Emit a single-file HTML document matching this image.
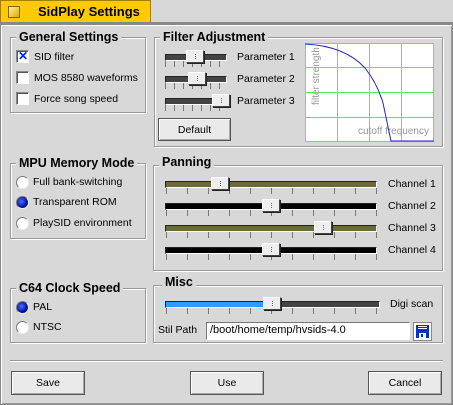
<!DOCTYPE html>
<html><head><meta charset="utf-8"><style>
*{box-sizing:border-box;margin:0;padding:0}
body{width:453px;height:405px;background:#d8d8d8;font-family:"Liberation Sans",sans-serif;font-size:10px;color:#000;position:relative;overflow:hidden}
.a{position:absolute}
.tab{left:0;top:0;width:151px;height:23px;background:#ffcb00;border:1px solid #a08000;border-bottom:none}
.win{left:0;top:22px;width:453px;height:383px;border:1px solid #888;box-shadow:inset 1px 1px 0 #fff,inset -1px -1px 0 #999;border-top:3px solid #888}
.box{border:1px solid #999;box-shadow:1px 1px 0 #fff,inset 1px 1px 0 #fff}
.ttl{font-weight:bold;font-size:12.5px;background:#d8d8d8;padding:0 3px;top:-9px;left:5px;position:absolute;line-height:16px}
.cb{width:13px;height:13px;background:#fff;border:1px solid #888;border-right-color:#fff;border-bottom-color:#fff;box-shadow:inset 1px 1px 0 #555}
.rd{width:13px;height:13px;border-radius:50%;background:#fff;border:1px solid #777;border-right-color:#eee;border-bottom-color:#eee}
.rd.on{background:radial-gradient(circle at 40% 40%,#4a6cff 0,#0010a0 60%,#000060 100%)}
.lbl{font-size:10.5px;line-height:12px}
.trk{height:7px;border:1px solid #222;border-bottom-color:#fff;border-right-color:#fff}
.tk{height:6px;background:repeating-linear-gradient(90deg,#777 0 1px,transparent 1px 21px)}
.th{width:18px;height:13px;background:#eee;border:1px solid #444;border-top-color:#fff;border-left-color:#fff;box-shadow:1px 1px 0 #222}
.th:after{content:"";position:absolute;left:8px;top:3px;width:1px;height:6px;background:repeating-linear-gradient(#666 0 1px,transparent 1px 2px)}
.btn{height:24px;background:#eaeaea;border:1px solid #555;box-shadow:inset 1px 1px 0 #fff,inset -1px -1px 0 #aaa;text-align:center;line-height:22px;font-size:10.5px}
</style></head><body>
<div class="a tab"><div class="a" style="left:7px;top:5px;width:12px;height:12px;background:linear-gradient(135deg,#fff3a0,#e0a800);border:1px solid #806000"></div><div class="a" style="left:37px;top:3px;font-weight:bold;font-size:13px">SidPlay Settings</div></div>
<div class="a win"></div>

<div class="a box" style="left:10px;top:37px;width:136px;height:76px"><span class="ttl">General Settings</span></div>
<div class="a cb" style="left:16px;top:50px"><span class="a" style="left:1px;top:-2px;color:#0020ff;font-weight:bold;font-size:12px">✕</span></div>
<div class="a lbl" style="left:34px;top:51px">SID filter</div>
<div class="a cb" style="left:16px;top:71px"></div><div class="a lbl" style="left:34px;top:72px">MOS 8580 waveforms</div>
<div class="a cb" style="left:16px;top:92px"></div><div class="a lbl" style="left:34px;top:93px">Force song speed</div>

<div class="a box" style="left:154px;top:37px;width:289px;height:110px"><span class="ttl">Filter Adjustment</span></div>
<div class="a trk" style="left:165px;top:54px;width:62px;background:#444"></div><div class="a tk" style="left:165px;top:61px;width:63px;background:repeating-linear-gradient(90deg,#777 0 1px,transparent 1px 9px)"></div><div class="a th" style="left:186px;top:50px"></div>
<div class="a lbl" style="left:237px;top:51px">Parameter 1</div>
<div class="a trk" style="left:165px;top:76px;width:62px;background:#444"></div><div class="a tk" style="left:165px;top:83px;width:63px;background:repeating-linear-gradient(90deg,#777 0 1px,transparent 1px 9px)"></div><div class="a th" style="left:188px;top:72px"></div>
<div class="a lbl" style="left:237px;top:73px">Parameter 2</div>
<div class="a trk" style="left:165px;top:98px;width:62px;background:#444"></div><div class="a tk" style="left:165px;top:105px;width:63px;background:repeating-linear-gradient(90deg,#777 0 1px,transparent 1px 9px)"></div><div class="a th" style="left:212px;top:94px"></div>
<div class="a lbl" style="left:237px;top:95px">Parameter 3</div>
<div class="a btn" style="left:158px;top:118px;width:73px;height:23px">Default</div>
<svg class="a" style="left:305px;top:43px" width="129" height="99" shape-rendering="crispEdges">
<rect x="0" y="0" width="129" height="99" fill="#fff"/>
<g fill="#5e5"><rect x="0" y="0" width="129" height="1"/><rect x="0" y="98" width="129" height="1"/><rect x="0" y="0" width="1" height="99"/><rect x="128" y="0" width="1" height="99"/>
<rect x="32" y="0" width="1" height="99"/><rect x="64" y="0" width="1" height="99"/><rect x="96" y="0" width="1" height="99"/>
<rect x="0" y="24" width="129" height="1"/><rect x="0" y="49" width="129" height="1"/><rect x="0" y="74" width="129" height="1"/></g>
<text x="124" y="91" text-anchor="end" font-size="10" fill="#999" font-family="Liberation Sans">cutoff frequency</text>
<text transform="translate(14,62) rotate(-90)" font-size="10" fill="#999" font-family="Liberation Sans">filter strength</text>
<path d="M0 1 Q40 3 60 25 Q72 40 78 60 L86 98 L129 98" fill="none" stroke="#22c" stroke-width="1" shape-rendering="auto"/>
</svg>

<div class="a box" style="left:10px;top:163px;width:136px;height:76px"><span class="ttl">MPU Memory Mode</span></div>
<div class="a rd" style="left:16px;top:176px"></div><div class="a lbl" style="left:33px;top:176px">Full bank-switching</div>
<div class="a rd on" style="left:16px;top:196px"></div><div class="a lbl" style="left:33px;top:196px">Transparent ROM</div>
<div class="a rd" style="left:16px;top:217px"></div><div class="a lbl" style="left:33px;top:217px">PlaySID environment</div>

<div class="a box" style="left:153px;top:165px;width:290px;height:106px"><span class="ttl" style="top:-12px">Panning</span></div>
<div class="a trk" style="left:165px;top:181px;width:212px;background:#6b6b3a"></div><div class="a tk" style="left:166px;top:188px;width:212px"></div><div class="a th" style="left:211px;top:177px"></div><div class="a lbl" style="left:388px;top:178px">Channel 1</div>
<div class="a trk" style="left:165px;top:203px;width:212px;background:#000"></div><div class="a tk" style="left:166px;top:210px;width:212px"></div><div class="a th" style="left:262px;top:199px"></div><div class="a lbl" style="left:388px;top:200px">Channel 2</div>
<div class="a trk" style="left:165px;top:225px;width:212px;background:#6b6b3a"></div><div class="a tk" style="left:166px;top:232px;width:212px"></div><div class="a th" style="left:314px;top:221px"></div><div class="a lbl" style="left:388px;top:222px">Channel 3</div>
<div class="a trk" style="left:165px;top:247px;width:212px;background:#000"></div><div class="a tk" style="left:166px;top:254px;width:212px"></div><div class="a th" style="left:262px;top:243px"></div><div class="a lbl" style="left:388px;top:244px">Channel 4</div>

<div class="a box" style="left:10px;top:288px;width:136px;height:55px"><span class="ttl">C64 Clock Speed</span></div>
<div class="a rd on" style="left:16px;top:301px"></div><div class="a lbl" style="left:33px;top:301px">PAL</div>
<div class="a rd" style="left:16px;top:321px"></div><div class="a lbl" style="left:33px;top:321px">NTSC</div>

<div class="a box" style="left:153px;top:285px;width:290px;height:58px"><span class="ttl" style="top:-12px;left:8px">Misc</span></div>
<div class="a trk" style="left:165px;top:301px;width:215px;background:linear-gradient(90deg,#3399ff 0 104px,#444 104px)"></div><div class="a tk" style="left:166px;top:308px;width:214px"></div><div class="a th" style="left:263px;top:297px"></div><div class="a lbl" style="left:390px;top:298px">Digi scan</div>
<div class="a lbl" style="left:158px;top:324px">Stil Path</div>
<div class="a" style="left:206px;top:322px;width:204px;height:18px;background:#fff;border:1px solid #777;border-right-color:#fff;border-bottom-color:#fff;font-size:11px;line-height:15px;padding-left:3px">/boot/home/temp/hvsids-4.0</div>
<div class="a" style="left:413px;top:322px;width:19px;height:19px;background:#fff;border:1px solid #888">
<div class="a" style="left:2px;top:2px;width:13px;height:13px;background:#0030d0"></div>
<div class="a" style="left:4px;top:3px;width:9px;height:4px;background:repeating-linear-gradient(#fff 0 1px,#0030d0 1px 2px)"></div>
<div class="a" style="left:5px;top:10px;width:7px;height:5px;background:#fff"></div>
<div class="a" style="left:7px;top:11px;width:2px;height:3px;background:#0030d0"></div></div>

<div class="a" style="left:10px;top:360px;width:433px;height:2px;border-top:1px solid #999;border-bottom:1px solid #fff"></div>
<div class="a btn" style="left:11px;top:371px;width:74px">Save</div>
<div class="a btn" style="left:190px;top:371px;width:74px">Use</div>
<div class="a btn" style="left:368px;top:371px;width:74px">Cancel</div>
</body></html>
